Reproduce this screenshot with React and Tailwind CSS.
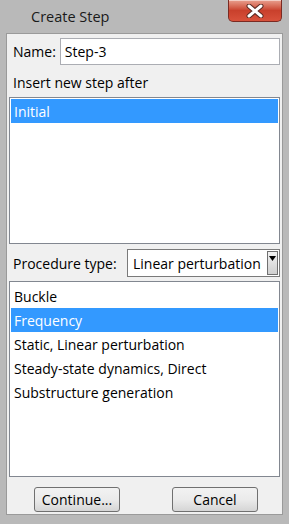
import React from 'react';

const font = { fontFamily: '"Open Sans", "Noto Sans", sans-serif' };

function CloseButton() {
  return (
    <div className="w-[54px] h-[22px] rounded-b-[5px] border border-[#7a2a22] border-t-0 bg-gradient-to-b from-[#e8a08f] via-[#c9402c] to-[#d8513b] flex items-center justify-center shadow-[inset_0_1px_0_rgba(255,255,255,0.5)]">
      <svg width="18" height="14" viewBox="0 0 18 14">
        <path d="M3 2 L15 12 M15 2 L3 12" stroke="#5a2a22" strokeWidth="5" strokeLinecap="round" />
        <path d="M3 2 L15 12 M15 2 L3 12" stroke="#ffffff" strokeWidth="3" strokeLinecap="round" />
      </svg>
    </div>
  );
}

function Row({ children, selected }) {
  return (
    <div
      className={`h-[24px] flex items-center px-[3px] whitespace-nowrap ${
        selected ? 'bg-[#3399ff] text-white' : 'text-black'
      }`}
    >
      {children}
    </div>
  );
}

export default function App() {
  const procedures = [
    'Buckle',
    'Frequency',
    'Static, Linear perturbation',
    'Steady-state dynamics, Direct',
    'Substructure generation',
  ];

  return (
    <div className="w-[289px] h-[524px] bg-[#b9b9b9] flex flex-col text-[14px] text-black" style={font}>
      {/* Title bar */}
      <div className="h-[33px] flex items-start justify-between">
        <div className="pl-[31px] pt-[6px] text-[14.5px] text-[#1a1a1a]">Create Step</div>
        <div className="pr-[7px]">
          <CloseButton />
        </div>
      </div>

      {/* Client area */}
      <div className="ml-[6px] mr-[6px] h-[482px] bg-[#f0f0f0] border border-[#9a9a9a] flex flex-col px-[2px]">
        <div className="flex items-center pt-[4px] pl-[4px] gap-[4px]">
          <span>Name:</span>
          <div className="flex-1 h-[27px] bg-white border border-[#abadb3] flex items-center px-[4px]">
            Step-3
          </div>
        </div>

        <div className="pl-[4px] mt-[6px] h-[22px] flex items-center">Insert new step after</div>

        <div className="mt-[4px] h-[147px] bg-white border border-[#828790] p-[1px]">
          <Row selected>Initial</Row>
        </div>

        <div className="flex items-center mt-[5px] pl-[4px]">
          <span className="w-[114px] whitespace-nowrap">Procedure type:</span>
          <div className="flex-1 h-[28px] bg-white border border-[#7a7a7a] flex items-center pl-[5px] pr-[1px]">
            <span className="flex-1 whitespace-nowrap">Linear perturbation</span>
            <div className="w-[11px] h-[24px] border border-[#707070] bg-gradient-to-b from-[#f2f2f2] to-[#cfcfcf] flex justify-center pt-[4px]">
              <svg width="7" height="5" viewBox="0 0 7 5">
                <path d="M0 0 L7 0 L3.5 5 Z" fill="#000" />
              </svg>
            </div>
          </div>
        </div>

        <div className="mt-[4px] h-[196px] bg-white border border-[#828790] p-[1px] pt-[2px]">
          {procedures.map((p) => (
            <Row key={p} selected={p === 'Frequency'}>
              {p}
            </Row>
          ))}
        </div>

        <div className="flex mt-[10px] pl-[25px] gap-[52px]">
          <button className="w-[86px] h-[25px] rounded-[3px] border border-[#707070] bg-gradient-to-b from-[#f2f2f2] via-[#ebebeb] to-[#d5d5d5] flex items-center justify-center">
            Continue...
          </button>
          <button className="w-[86px] h-[25px] rounded-[3px] border border-[#707070] bg-gradient-to-b from-[#f2f2f2] via-[#ebebeb] to-[#d5d5d5] flex items-center justify-center">
            Cancel
          </button>
        </div>
      </div>
    </div>
  );
}
